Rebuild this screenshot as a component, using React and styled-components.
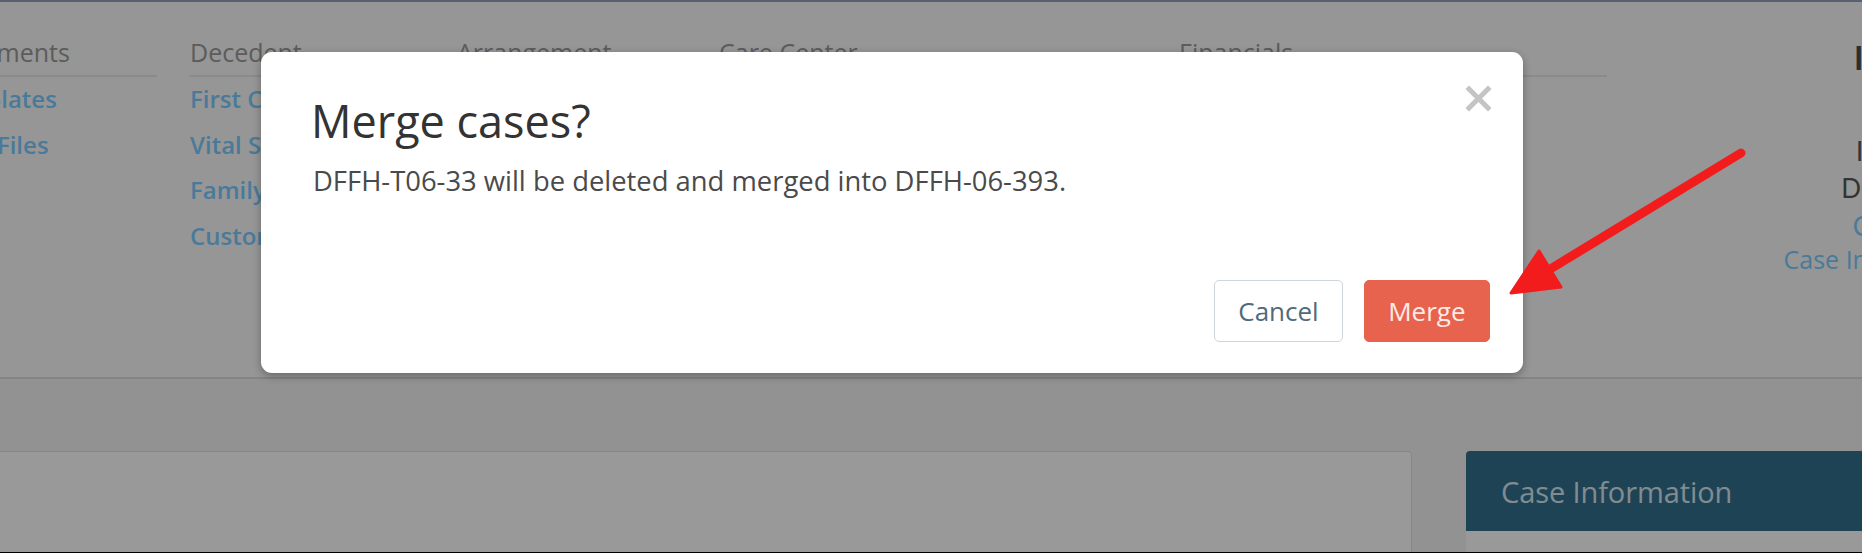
import React from "react";
import styled, { createGlobalStyle } from "styled-components";

const Global = createGlobalStyle`
  html, body { margin: 0; padding: 0; width: 1862px; height: 553px; overflow: hidden; }
  body { font-family: "Open Sans", "Lato", sans-serif; background: #f3f3f3; }
  * { box-sizing: border-box; }
`;

const Page = styled.div`
  position: relative;
  width: 1862px;
  height: 553px;
  display: flex;
  flex-direction: column;
  overflow: hidden;
  background: #f3f3f3;
`;

const TopLine = styled.div`
  height: 2px;
  flex: none;
  background: #8fa3bb;
`;

const Header = styled.header`
  height: 377px;
  flex: none;
  display: flex;
  background: #fbfbfb;
  border-bottom: 2px solid #dcdcdc;
`;

const Nav = styled.nav`
  display: flex;
  gap: 33px;
  margin-left: -64px;
  padding-top: 35px;
  flex: none;
`;

const Column = styled.div`
  width: ${(p) => p.$w}px;
  flex: none;
`;

const ColHeader = styled.div`
  font-family: "Open Sans", sans-serif;
  font-size: 25px;
  line-height: 30px;
  color: #999999;
  padding-bottom: 8px;
  border-bottom: 2px solid #e6e6e6;
  white-space: nowrap;
`;

const LinkList = styled.div`
  display: flex;
  flex-direction: column;
  margin-top: -1px;
`;

const NavLink = styled.a`
  font-family: "Open Sans", sans-serif;
  font-weight: 600;
  font-size: 24px;
  line-height: 45.5px;
  color: #7cccff;
  white-space: nowrap;
  text-decoration: none;
`;

const Profile = styled.div`
  margin-left: 33px;
  width: 620px;
  flex: none;
  text-align: center;
  padding-top: 35.5px;
  white-space: nowrap;
`;

const ProfileName = styled.div`
  font-family: "Lato", sans-serif;
  font-weight: 700;
  font-size: 32px;
  line-height: 40px;
  letter-spacing: 0.6px;
  color: #4b4b4b;
  margin-bottom: 56.5px;
`;

const ProfileLine = styled.div`
  font-family: ${(p) => (p.$alt ? '"Open Sans"' : '"Lato"')}, sans-serif;
  font-size: ${(p) => (p.$alt ? 25 : 26)}px;
  line-height: 35px;
  letter-spacing: ${(p) => p.$spacing || 0}px;
  margin-top: ${(p) => p.$shift || 0}px;
  color: ${(p) => (p.$link ? "#7cccff" : "#555555")};
`;

const Lower = styled.section`
  flex: 1;
  display: flex;
  gap: 54px;
  padding-top: 72px;
  overflow: hidden;
  background: #f3f3f3;
`;

const MainCard = styled.div`
  flex: 1;
  margin-left: -10px;
  background: #ffffff;
  border: 1px solid #e2e2e2;
  border-bottom: none;
  border-radius: 4px 4px 0 0;
`;

const SideCard = styled.div`
  width: 450px;
  flex: none;
  margin-right: -54px;
  background: #ffffff;
  border-radius: 4px 4px 0 0;
  overflow: hidden;
`;

const SideCardHeader = styled.div`
  height: 80px;
  display: flex;
  align-items: center;
  padding-left: 35px;
  background: #32718e;
  font-family: "Open Sans", sans-serif;
  font-size: 29px;
  letter-spacing: -0.1px;
  color: #d8e8f0;
`;

const BottomBar = styled.div`
  height: 1px;
  flex: none;
  background: #000;
`;

const Backdrop = styled.div`
  position: absolute;
  inset: 0;
  background: rgba(0, 0, 0, 0.4);
`;

const Modal = styled.div`
  position: absolute;
  left: 261px;
  top: 52px;
  width: 1262px;
  height: 321px;
  background: #ffffff;
  border-radius: 11px;
  box-shadow: 0 3px 9px rgba(0, 0, 0, 0.3);
  padding: 44px 33px 31px 50px;
  display: flex;
  flex-direction: column;
  font-family: "Open Sans", sans-serif;
`;

const ModalHeader = styled.div`
  display: flex;
  align-items: flex-start;
  justify-content: space-between;
`;

const Title = styled.h2`
  margin: 0;
  font-family: "Open Sans", sans-serif;
  font-weight: 400;
  font-size: 45px;
  line-height: 50px;
  color: #333333;
`;

const CloseButton = styled.button`
  border: none;
  background: none;
  padding: 0;
  margin: -11px -2px 0 0;
  width: 27px;
  height: 27px;
  display: flex;
  cursor: pointer;
`;

const Body = styled.p`
  margin: 17px 0 0 2px;
  font-size: 27.4px;
  line-height: 36px;
  color: #4a4a4a;
`;

const Footer = styled.div`
  margin-top: auto;
  display: flex;
  justify-content: flex-end;
  align-items: center;
  gap: 21px;
`;

const Button = styled.button`
  height: 62px;
  padding: 0 ${(p) => (p.$primary ? 23.5 : 23)}px;
  border-radius: 5px;
  font-family: "Open Sans", sans-serif;
  font-size: 26px;
  border: 1px solid ${(p) => (p.$primary ? "#e8634e" : "#cdd5dd")};
  background: ${(p) => (p.$primary ? "#e8634e" : "#ffffff")};
  color: ${(p) => (p.$primary ? "#fdebe7" : "#52697a")};
  cursor: pointer;
`;

const Annotation = styled.svg`
  position: absolute;
  inset: 0;
  pointer-events: none;
`;

export default function App() {
  const columns = [
    { w: 221, title: "Documents", links: ["Templates", "Case Files"] },
    { w: 234, title: "Decedent", links: ["First Call", "Vital Stats", "Family", "Custom"] },
    { w: 229, title: "Arrangement", links: [] },
    { w: 427, title: "Care Center", links: [] },
    { w: 428, title: "Financials", links: [] },
  ];
  return (
    <>
      <Global />
      <Page>
        <TopLine />
        <Header>
          <Nav>
            {columns.map((c) => (
              <Column key={c.title} $w={c.w}>
                <ColHeader>{c.title}</ColHeader>
                <LinkList>
                  {c.links.map((l) => (
                    <NavLink key={l}>{l}</NavLink>
                  ))}
                </LinkList>
              </Column>
            ))}
          </Nav>
          <Profile>
            <ProfileName>Irene Harlow</ProfileName>
            <ProfileLine>Immediate Need</ProfileLine>
            <ProfileLine $shift={2}>DOD: 06/12/2017</ProfileLine>
            <ProfileLine $link $shift={3} $spacing={0.3}>Change Location</ProfileLine>
            <ProfileLine $link $alt $shift={-2}>Case Information Worksheet</ProfileLine>
          </Profile>
        </Header>
        <Lower>
          <MainCard />
          <SideCard>
            <SideCardHeader>Case Information</SideCardHeader>
          </SideCard>
        </Lower>
        <BottomBar />
        <Backdrop />
        <Modal role="dialog">
          <ModalHeader>
            <Title>Merge cases?</Title>
            <CloseButton aria-label="Close">
              <svg width="27" height="27" viewBox="0 0 27 27">
                <path d="M4 4 L23 23 M23 4 L4 23" stroke="#c4c4c4" strokeWidth="5" strokeLinecap="square" />
              </svg>
            </CloseButton>
          </ModalHeader>
          <Body>DFFH-T06-33 will be deleted and merged into DFFH-06-393.</Body>
          <Footer>
            <Button>Cancel</Button>
            <Button $primary>Merge</Button>
          </Footer>
        </Modal>
        <Annotation width="1862" height="553" viewBox="0 0 1862 553">
          <line x1="1741" y1="153" x2="1552" y2="268" stroke="#f31c1c" strokeWidth="9" strokeLinecap="round" />
          <polygon points="1511,293 1561,287 1539,251" fill="#f31c1c" stroke="#f31c1c" strokeWidth="3" strokeLinejoin="round" />
        </Annotation>
      </Page>
    </>
  );
}
